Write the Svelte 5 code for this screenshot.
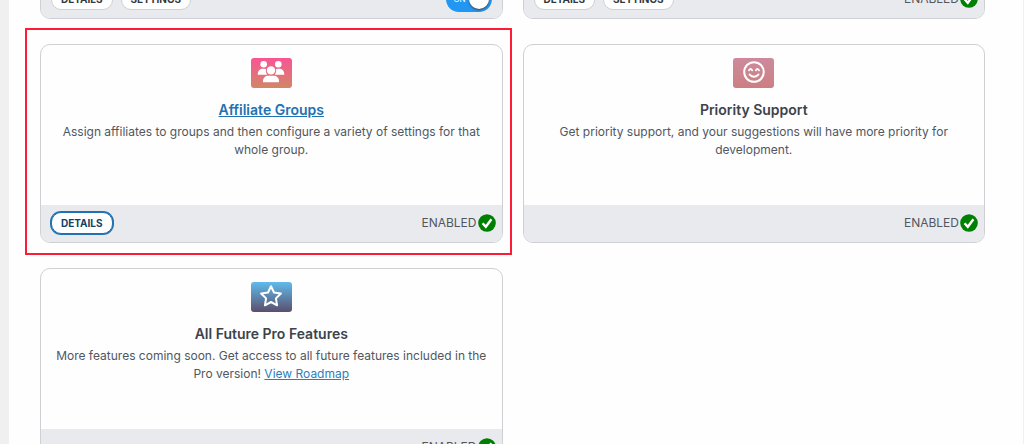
<script>
  let autoPay = $state(true);

  const features = [
    { id: 'first', actions: ['Details', 'Settings'], toggle: true },
    { id: 'second', actions: ['Details', 'Settings'] },
    {
      id: 'groups',
      title: 'Affiliate Groups',
      href: '#groups',
      text: 'Assign affiliates to groups and then configure a variety of settings for that whole group.',
      actions: ['Details'],
      active: true
    },
    {
      id: 'support',
      title: 'Priority Support',
      text: 'Get priority support, and your suggestions will have more priority for development.',
      actions: []
    },
    {
      id: 'future',
      title: 'All Future Pro Features',
      text: 'More features coming soon. Get access to all future features included in the Pro version!',
      link: 'View Roadmap',
      actions: []
    }
  ];
</script>

{#snippet icon(id)}
  <div class="icon {id}">
    {#if id === 'groups'}
      <svg viewBox="0 0 28 24" width="28" height="24" fill="#fff">
        <circle cx="6.7" cy="4.2" r="3.3" />
        <circle cx="21.3" cy="4.2" r="3.3" />
        <path d="M.8 14.8v-1.4a4.6 4.6 0 0 1 4.6-4.6h2q.8 0 1.5.3-.6 3.2 1.3 5.7z" />
        <path d="M27.2 14.8v-1.4a4.6 4.6 0 0 0-4.6-4.6h-2q-.8 0-1.5.3.6 3.2-1.3 5.7z" />
        <circle cx="14" cy="10.4" r="4.2" />
        <path d="M6 22.2v-1.6a5 5 0 0 1 5-4.8h6a5 5 0 0 1 5 4.8v1.6z" />
      </svg>
    {:else if id === 'support'}
      <svg viewBox="0 0 24 24" width="24" height="24" fill="none" stroke="#fff" stroke-width="2" stroke-linecap="round">
        <circle cx="12" cy="12" r="9.8" />
        <path d="M7 10.4q1.6-2.8 3.2 0M13.8 10.4q1.6-2.8 3.2 0M7.5 14.5q4.5 4.4 9 0" stroke-width="1.8" />
      </svg>
    {:else}
      <svg viewBox="0 0 24 24" width="24" height="24" fill="none" stroke="#fff" stroke-width="2" stroke-linejoin="round">
        <path d="M12 2.2l3 6.3 6.9 1-5 4.9 1.2 6.9-6.1-3.3-6.1 3.3 1.2-6.9-5-4.9 6.9-1z" />
      </svg>
    {/if}
  </div>
{/snippet}

<main>
  <section class="features">
    {#each features as f}
      <article class="card">
        {#if f.title}
          <div class="body">
            {@render icon(f.id)}
            <h3>
              {#if f.href}<a href={f.href}>{f.title}</a>{:else}{f.title}{/if}
            </h3>
            <p>
              {f.text}
              {#if f.link}<a href="#roadmap">{f.link}</a>{/if}
            </p>
          </div>
        {/if}
        <footer>
          <div class="actions">
            {#each f.actions as action}
              <button type="button" class:active={f.active}>{action}</button>
            {/each}
          </div>
          {#if f.toggle}
            <label class="switch">
              <input type="checkbox" role="switch" aria-label="Enable feature" bind:checked={autoPay} />
              <span class="on">ON</span>
              <span class="knob"></span>
            </label>
          {:else}
            <span class="status">
              ENABLED
              <svg viewBox="0 0 18 18" width="18" height="18">
                <circle cx="9" cy="9" r="8.8" fill="#008000" />
                <path d="M4.6 9.2l3.2 3.6 5.6-7.6" fill="none" stroke="#fff" stroke-width="2.4" />
              </svg>
            </span>
          {/if}
        </footer>
        {#if f.active}<div class="highlight"></div>{/if}
      </article>
    {/each}
  </section>
</main>

<style>
  :global(body) {
    background: #f0f0f0;
  }

  main {
    box-sizing: border-box;
    height: 100vh;
    overflow: hidden;
    margin: 0 1px 0 9px;
    padding: 0 38px 0 31px;
    background: #fefefe;
    color: #50575e;
    font-family: Inter, sans-serif;
    font-size: 12px;
    line-height: 18px;
  }

  /* the list is scrolled, the first row shows only its lower edge */
  .features {
    display: grid;
    grid-template-columns: 1fr 1fr;
    gap: 25px 20px;
    margin-top: -20px;
  }

  .card {
    position: relative;
    display: flex;
    flex-direction: column;
    border: 1px solid #cfd0d4;
    border-radius: 10px;
    background: #fefefe;
  }

  .body {
    box-sizing: border-box;
    min-height: 160px;
    padding: 13px 15px;
    text-align: center;
  }

  .icon {
    display: flex;
    justify-content: center;
    width: 41px;
    height: 30px;
    margin: 0 auto;
    padding-top: 2px;
    box-sizing: border-box;
    border-radius: 3px;
  }

  .icon.groups {
    background: linear-gradient(#fa5495, #d08767);
  }

  .icon.support {
    background: linear-gradient(#cd8a9c, #cc7f82);
  }

  .icon.future {
    background: linear-gradient(#5fbcec, #5b4e6d);
  }

  h3 {
    margin: 12px 0 3px;
    color: #3c434a;
    font-size: 14px;
    font-weight: 600;
    line-height: 20px;
  }

  p {
    margin: 0;
  }

  a {
    color: #2e7ebb;
  }

  h3 a {
    color: #2271b1;
  }

  footer {
    display: flex;
    align-items: center;
    justify-content: space-between;
    box-sizing: border-box;
    height: 37px;
    padding: 0 6px 1px 10px;
    border-radius: 0 0 9px 9px;
    background: #e9eaee;
  }

  .actions {
    display: flex;
    gap: 8px;
  }

  button {
    height: 22px;
    padding: 0 9px;
    border: 1px solid #cfd0d4;
    border-radius: 10px;
    background: #fff;
    color: #32373c;
    font: 700 10px/20px Inter, sans-serif;
    text-transform: uppercase;
  }

  button.active {
    border-color: #2271b1;
    box-shadow: 0 0 0 1px #2271b1;
    color: #0f4163;
  }

  .status {
    display: flex;
    align-items: center;
    gap: 1px;
  }

  .switch {
    position: relative;
    display: flex;
    align-items: center;
    box-sizing: border-box;
    width: 46px;
    height: 26px;
    margin-right: 4px;
    padding-left: 8px;
    border-radius: 13px;
    background: #2196f3;
    color: #fff;
    font-size: 8px;
  }

  .switch input {
    position: absolute;
    inset: 0;
    margin: 0;
    opacity: 0;
  }

  .knob {
    position: absolute;
    top: 3px;
    right: 3px;
    width: 20px;
    height: 20px;
    border-radius: 50%;
    background: #fff;
    box-shadow: 0 1px 2px #444;
  }

  .highlight {
    position: absolute;
    inset: -17px -10px -13px -16px;
    border: 2px solid #fc1c36;
    pointer-events: none;
  }
</style>
